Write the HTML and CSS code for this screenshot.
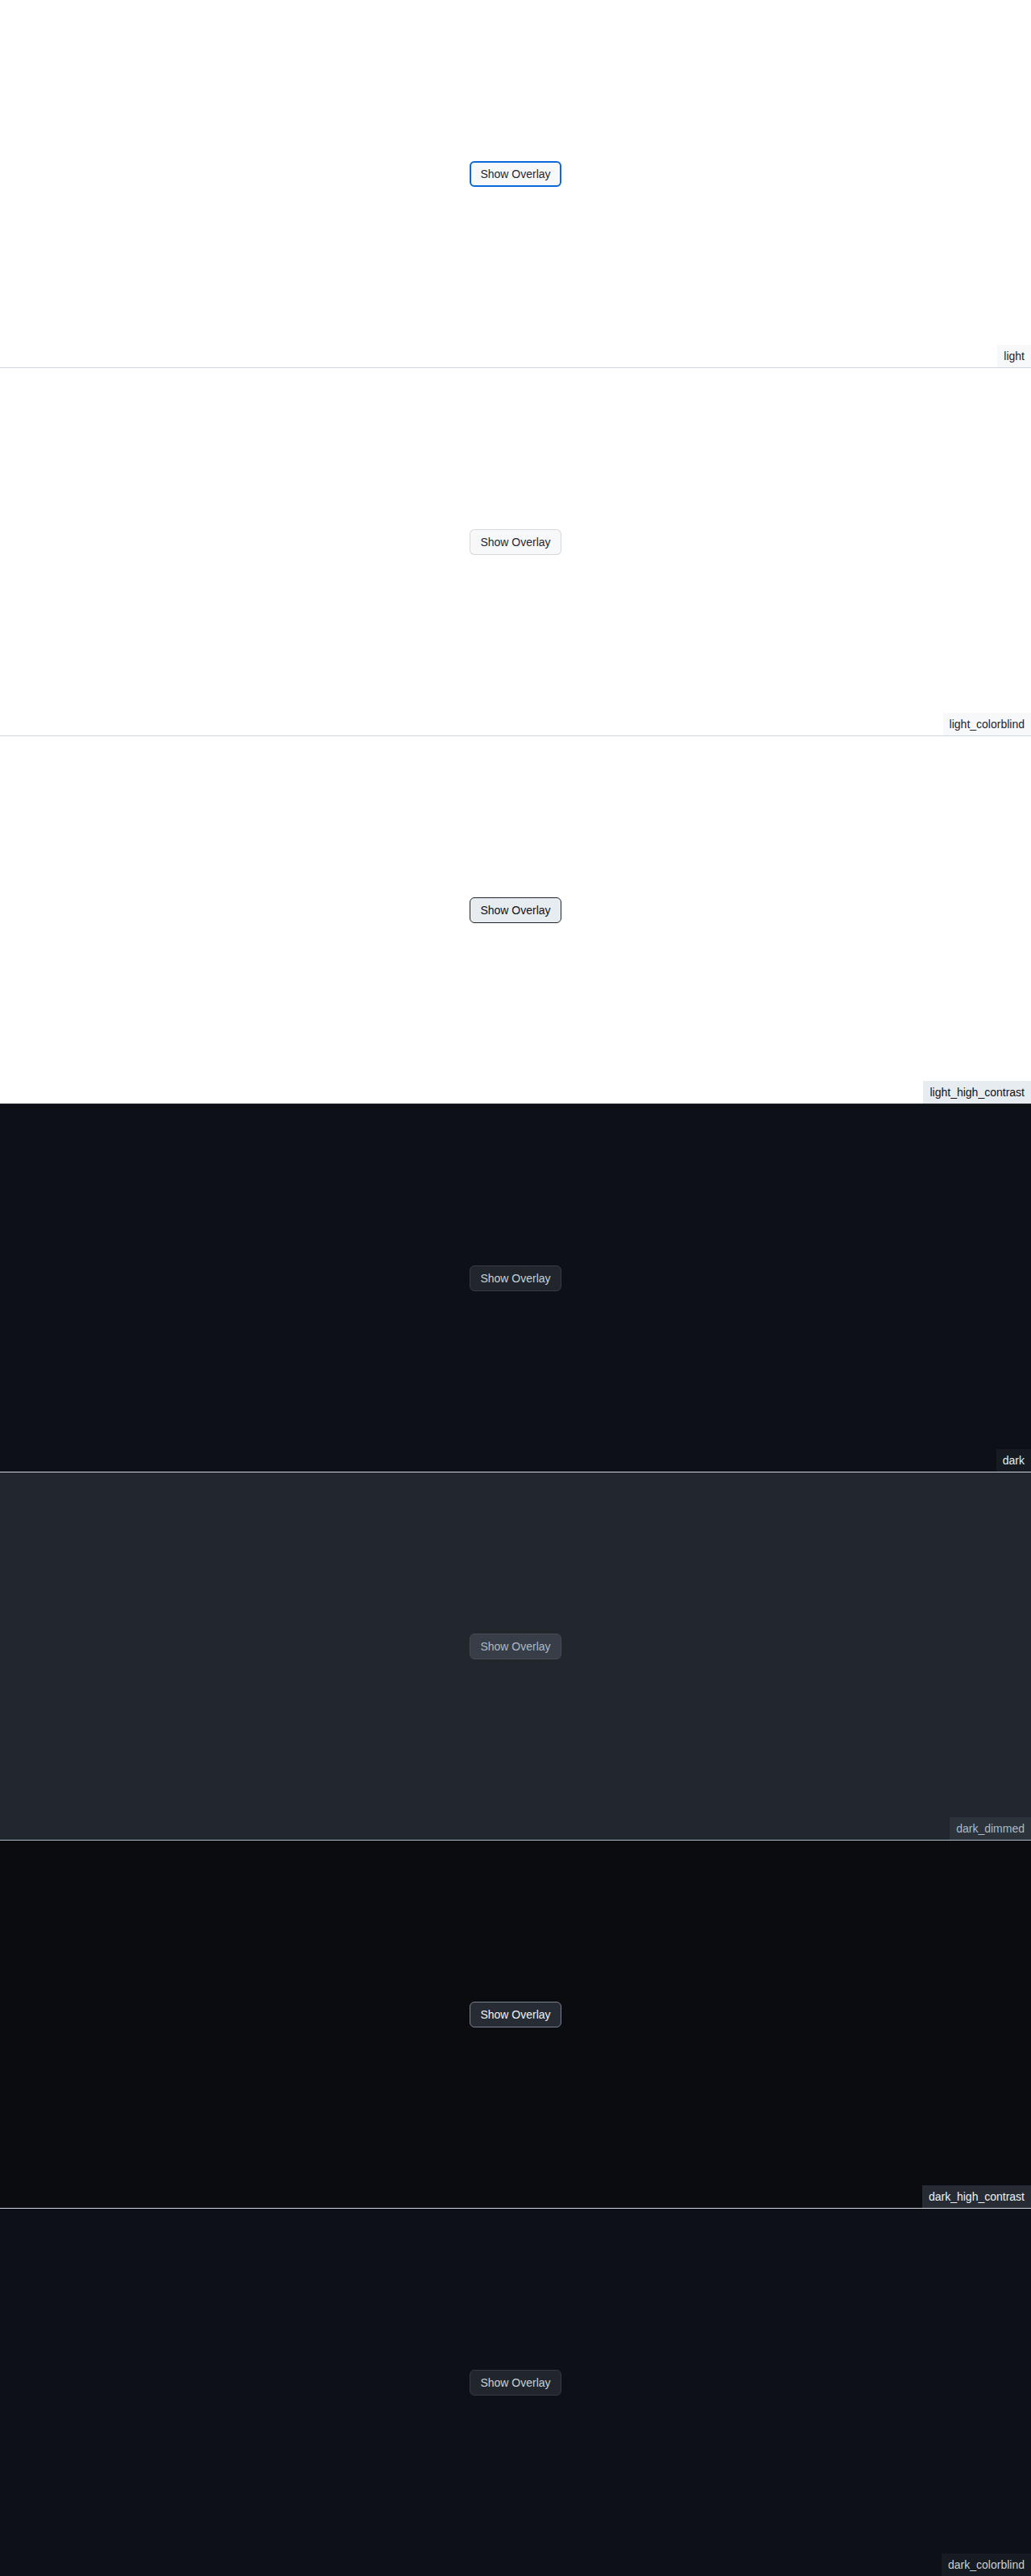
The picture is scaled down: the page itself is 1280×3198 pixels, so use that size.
FILE: index.html
```html
<!DOCTYPE html>
<html lang="en">
<head>
<meta charset="utf-8">
<title>Show Overlay themes</title>
<link rel="stylesheet" href="styles.css">
</head>
<body>
  <section class="panel theme-light">
    <div class="stage"><button class="btn focused" type="button">Show Overlay</button></div>
    <span class="label">light</span>
  </section>
  <section class="panel theme-light-cb">
    <div class="stage"><button class="btn" type="button">Show Overlay</button></div>
    <span class="label">light_colorblind</span>
  </section>
  <section class="panel theme-light-hc">
    <div class="stage"><button class="btn" type="button">Show Overlay</button></div>
    <span class="label">light_high_contrast</span>
  </section>
  <section class="panel theme-dark">
    <div class="stage"><button class="btn" type="button">Show Overlay</button></div>
    <span class="label">dark</span>
  </section>
  <section class="panel theme-dark-dimmed">
    <div class="stage"><button class="btn" type="button">Show Overlay</button></div>
    <span class="label">dark_dimmed</span>
  </section>
  <section class="panel theme-dark-hc">
    <div class="stage"><button class="btn" type="button">Show Overlay</button></div>
    <span class="label">dark_high_contrast</span>
  </section>
  <section class="panel theme-dark-cb last">
    <div class="stage"><button class="btn" type="button">Show Overlay</button></div>
    <span class="label">dark_colorblind</span>
  </section>
</body>
</html>
```

FILE: styles.css
```css
* { box-sizing: border-box; }
html, body { margin: 0; padding: 0; }
body {
  font-family: "Liberation Sans", Arial, sans-serif;
  font-size: 14px;
  line-height: 20px;
}
.panel {
  position: relative;
  height: 457px;
  border-bottom: 1px solid var(--sep);
  background: var(--bg);
  display: flex;
  flex-direction: column;
}
.panel.last { height: 456px; border-bottom: 0; }
.stage {
  flex: 1;
  display: flex;
  align-items: center;
  justify-content: center;
  padding-bottom: 24px;
}
.btn {
  font-family: inherit;
  font-size: 14px;
  line-height: 20px;
  height: 32px;
  padding: 0 12px;
  border-radius: 6px;
  border: 1px solid var(--btn-border);
  background: var(--btn-bg);
  color: var(--btn-fg);
  cursor: pointer;
  min-width: 114px;
}
.btn.focused {
  outline: 2px solid #0969da;
  outline-offset: -2px;
}
.label {
  position: absolute;
  right: 0;
  bottom: 0;
  padding: 4px 8px;
  font-size: 14px;
  line-height: 20px;
  background: var(--label-bg);
  color: var(--label-fg);
}
.theme-light {
  --bg: #ffffff; --sep: #d0d7de;
  --btn-bg: #f6f8fa; --btn-border: rgba(31,35,40,0.15); --btn-fg: #24292f;
  --label-bg: #f6f8fa; --label-fg: #1f2328;
}
.theme-light-cb {
  --bg: #ffffff; --sep: #d0d7de;
  --btn-bg: #f6f8fa; --btn-border: rgba(31,35,40,0.15); --btn-fg: #24292f;
  --label-bg: #f6f8fa; --label-fg: #1f2328;
}
.theme-light-hc {
  --bg: #ffffff; --sep: #20252c;
  --btn-bg: #e7ecf0; --btn-border: #20252c; --btn-fg: #0e1116;
  --label-bg: #e7ecf0; --label-fg: #0e1116;
}
.theme-dark {
  --bg: #0d1117; --sep: #d0d7de;
  --btn-bg: #21262d; --btn-border: #363b42; --btn-fg: #c9d1d9;
  --label-bg: #161b22; --label-fg: #e6edf3;
}
.theme-dark-dimmed {
  --bg: #22272e; --sep: #adbac7;
  --btn-bg: #373e47; --btn-border: #444c56; --btn-fg: #adbac7;
  --label-bg: #2d333b; --label-fg: #adbac7;
}
.theme-dark-hc {
  --bg: #0a0c10; --sep: #d0d7de;
  --btn-bg: #272b33; --btn-border: #7a828e; --btn-fg: #f0f3f6;
  --label-bg: #272b33; --label-fg: #f0f3f6;
}
.theme-dark-cb {
  --bg: #0d1117; --sep: #d0d7de;
  --btn-bg: #21262d; --btn-border: #363b42; --btn-fg: #c9d1d9;
  --label-bg: #161b22; --label-fg: #c9d1d9;
}
```
